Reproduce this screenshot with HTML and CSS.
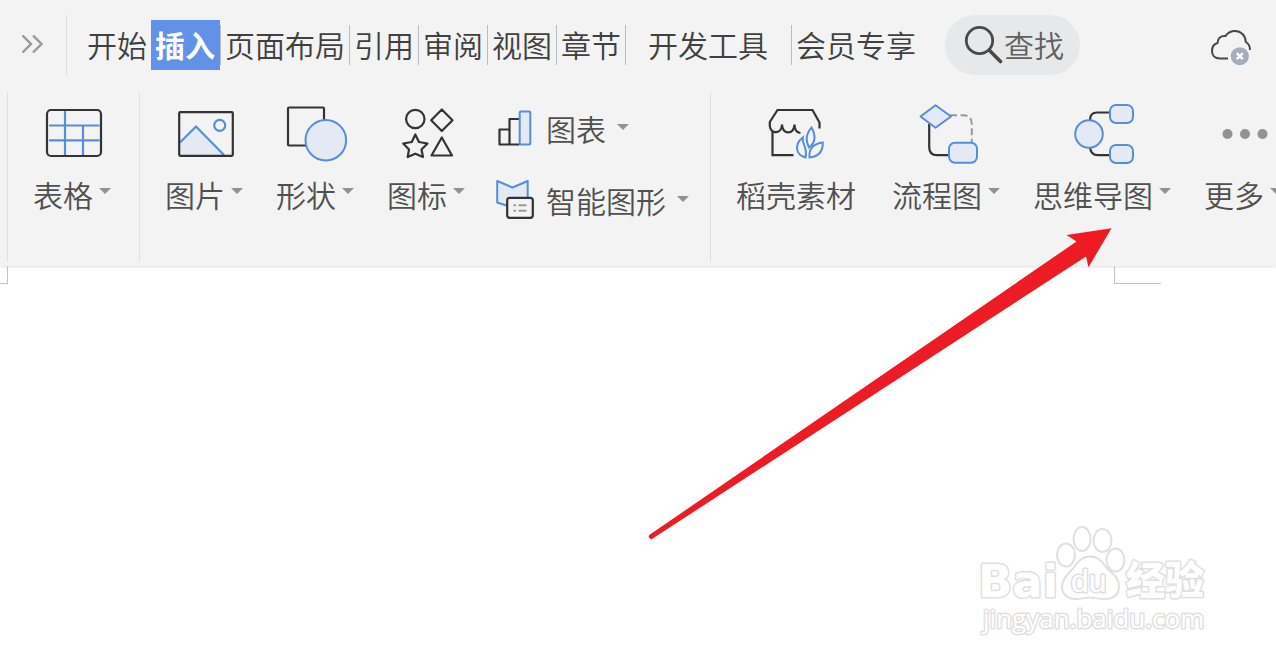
FILE: index.html
```html
<!DOCTYPE html>
<html lang="zh-CN">
<head>
<meta charset="utf-8">
<meta name="viewport" content="width=device-width, initial-scale=1">
<title>插入</title>
<link rel="stylesheet" href="styles.css">
</head>
<body>
<div class="app">
  <header class="toolbar">
    <nav class="tabs">
      <button class="expand" type="button" aria-label="展开">
        <svg width="24" height="20" viewBox="20 34 24 20"><path d="M22.500 34.500l8.500 8.500l-8.500 8.500M33 34.500l8.500 8.500l-8.500 8.500" fill="none" stroke="#999" stroke-width="2.400"/></svg>
      </button>
      <button class="tab tab-first" type="button">开始</button>
      <button class="tab tab-active" type="button">插入</button>
      <button class="tab" type="button">页面布局</button>
      <button class="tab" type="button">引用</button>
      <button class="tab" type="button">审阅</button>
      <button class="tab" type="button">视图</button>
      <button class="tab" type="button">章节</button>
      <button class="tab tab-wide" type="button">开发工具</button>
      <button class="tab" type="button">会员专享</button>
      <button class="search" type="button">
        <svg width="40" height="40" viewBox="964 25 40 40"><g fill="none" stroke="#484848" stroke-linecap="round"><circle cx="979.500" cy="41.500" r="13.200" stroke-width="2.800"/><path d="M989.500 51.500L1000.500 62.500" stroke-width="3.600"/></g></svg>
        <span>查找</span>
      </button>
      <button class="cloud" type="button" aria-label="云状态">
        <svg width="44" height="40" viewBox="1209 27 44 40"><path d="M1228 58.500H1220C1214.500 58.500 1212 55 1212 51C1212 46.500 1214.500 43.800 1217.500 43C1217.500 38 1221 35.500 1225.500 36C1228 32.500 1231.500 31 1235 31C1241 31 1245.500 35.500 1245.800 42C1248.500 43.500 1250 46.500 1250 50" fill="none" stroke="#484848" stroke-width="2"/><circle cx="1239.800" cy="56.200" r="9" fill="#a3adbd"/><path d="M1236.800 53.200l6 6m0-6l-6 6" stroke="#fff" stroke-width="2.400"/></svg>
      </button>
    </nav>
    <div class="ribbon">
      <div class="edge"></div>
      <div class="group">
        <button class="item" type="button">
          <svg class="icon" viewBox="40 100 64 64"><path d="M65 111V155M83 125V155M49 125.500H99.500M49 140.300H99.500" fill="none" stroke="#568ddd" stroke-width="2.200"/><rect x="47" y="110" width="54" height="46" rx="4" fill="none" stroke="#333" stroke-width="2.200"/></svg>
          <span class="label">表格<i class="caret"></i></span>
        </button>
      </div>
      <div class="group">
        <button class="item" type="button">
          <svg class="icon" viewBox="172 100 64 64"><path d="M180 142.500L196 126.500L224 155H180Z" fill="#e4e9f3"/><path d="M180 142.500L196 126.500L224 155" fill="none" stroke="#568ddd" stroke-width="2.200"/><circle cx="219.700" cy="125.300" r="5.500" fill="none" stroke="#568ddd" stroke-width="2.200"/><rect x="179.200" y="112.200" width="53.600" height="43.600" rx="1" fill="none" stroke="#333" stroke-width="2.200"/></svg>
          <span class="label">图片<i class="caret"></i></span>
        </button>
        <button class="item" type="button">
          <svg class="icon" viewBox="283 100 64 64"><rect x="288" y="107.500" width="36" height="38" rx="1" fill="none" stroke="#333" stroke-width="2.200"/><circle cx="325.800" cy="140.200" r="20.300" fill="#e4e9f3" stroke="#568ddd" stroke-width="2"/></svg>
          <span class="label">形状<i class="caret"></i></span>
        </button>
        <button class="item" type="button">
          <svg class="icon" viewBox="394 100 64 64"><g fill="none" stroke="#333" stroke-width="2.200" stroke-linejoin="round"><circle cx="415.300" cy="119" r="9.200"/><path d="M441.800 109.500L452.500 120.200L441.800 131L431.200 120.200ZM441.800 137.500L452 155.500H431.500ZM415.300 134.500L419 142L427.500 143.500L421.500 149.500L423 157L415.300 153.700L407.700 157L409 149.500L403.200 143.500L411.800 142Z"/></g></svg>
          <span class="label">图标<i class="caret"></i></span>
        </button>
        <div class="stack">
          <button class="row" type="button">
            <svg class="small" viewBox="498 107 38 40"><path d="M509.500 143.500H499.500V128.500H509.500M509.500 143.500V118H519.500M509.500 143.500H519.500" fill="none" stroke="#333" stroke-width="2.200" stroke-linejoin="round"/><rect x="519.700" y="110.500" width="10.600" height="33" rx="1" fill="#e4e9f3" stroke="#568ddd" stroke-width="2"/></svg>
            <span>图表</span><i class="caret"></i>
          </button>
          <button class="row" type="button">
            <svg class="small" viewBox="498 180 38 40"><path d="M508 206L497.200 202.500V181L512.500 187.500L527.700 181V199" fill="#e4e9f3" stroke="#568ddd" stroke-width="2" stroke-linejoin="round"/><rect x="507.200" y="197.800" width="25.600" height="20" rx="2.500" fill="#f3f3f3" stroke="#333" stroke-width="2.200"/><path d="M513.500 205.300h2.500m2.500 0h8M513.500 210.700h2.500m2.500 0h8" stroke="#999" stroke-width="2"/></svg>
            <span>智能图形</span><i class="caret"></i>
          </button>
        </div>
      </div>
      <div class="group group-last">
        <button class="item item-plain" type="button">
          <svg class="icon" viewBox="764 100 64 64"><path d="M819.500 128.500V122.500L812.500 110H777.500L769.800 122V126C770.500 135 782 134 782 124.500C782 135 794.500 135 794.500 124.500C794.500 129.500 796.500 132.500 800.500 133M772.500 132V155.200H793.500" fill="none" stroke="#333" stroke-width="2.200"/><g fill="none" stroke="#568ddd" stroke-width="2"><path d="M811.500 127.500C805.500 135 805.500 140.500 809 147.500C816 142 815.500 134.500 811.500 127.500ZM802.800 137.500C801.500 144 808 147 805.500 157.500C795.500 155 794 144.500 802.800 137.500ZM822.800 142.500C813.500 143.500 808.500 149 809.500 157.500C819 156.500 823 151 822.800 142.500Z"/></g></svg>
          <span class="label">稻壳素材</span>
        </button>
        <button class="item" type="button">
          <svg class="icon" viewBox="914 100 64 64"><path d="M929.200 124V147Q929.200 155.200 937 155.200H950" fill="none" stroke="#333" stroke-width="2.200"/><path d="M950 115.200H963Q971.800 115.200 971.800 124V142" fill="none" stroke="#999" stroke-width="2" stroke-dasharray="7 3.500"/><path d="M935.500 105.200L951 116.500L935.500 127.700L920.500 116.500Z" fill="#e4e9f3" stroke="#568ddd" stroke-width="2" stroke-linejoin="round"/><rect x="949" y="142.800" width="28" height="20" rx="6" fill="#e4e9f3" stroke="#568ddd" stroke-width="2"/></svg>
          <span class="label">流程图<i class="caret"></i></span>
        </button>
        <button class="item" type="button">
          <svg class="icon" viewBox="1070 100 64 64"><path d="M1110 112.500H1097Q1090 112.500 1090 120M1110 155.200H1098Q1090.500 155.200 1090 147" fill="none" stroke="#333" stroke-width="2.200"/><g fill="#e4e9f3" stroke="#568ddd" stroke-width="2"><circle cx="1089" cy="134" r="13.800"/><rect x="1110" y="105" width="23" height="18" rx="6"/><rect x="1110" y="145" width="23" height="18" rx="6"/></g></svg>
          <span class="label">思维导图<i class="caret"></i></span>
        </button>
        <button class="item" type="button">
          <svg class="icon" viewBox="1211 100 64 64"><g fill="#929292"><circle cx="1227.500" cy="134" r="5"/><circle cx="1245" cy="134" r="5"/><circle cx="1262.500" cy="134" r="5"/></g></svg>
          <span class="label">更多<i class="caret"></i></span>
        </button>
      </div>
    </div>
  </header>
  <main class="page">
    <span class="corner corner-left"></span>
    <span class="corner corner-right"></span>
  </main>
  <svg class="arrow" width="468" height="316" viewBox="646 226 468 316" aria-hidden="true"><path d="M649.300 535L1076.500 241.500L1066.500 235L1111.500 228.300L1088.500 267.300L1086 256.500L652.300 538.800A2.500 2.500 0 0 1 649.300 535Z" fill="#ed1c24"/></svg>
  <svg class="watermark" width="240" height="118" viewBox="974 522 240 118" role="img" aria-label="Baidu 经验">
    <g class="mark">
      <ellipse cx="1066" cy="555" rx="9" ry="11.500"/>
      <ellipse cx="1082" cy="539" rx="8.500" ry="12"/>
      <ellipse cx="1102.500" cy="540.500" rx="9" ry="11.500"/>
      <ellipse cx="1115.500" cy="560" rx="9" ry="11.500"/>
      <path d="M1090 556.500C1097 556.500 1102 561 1105 566C1110 573 1119 576 1119 586C1119 595 1113 599 1104 599C1098 599 1094 597.500 1090 597.500C1086 597.500 1082 599 1076 599C1067 599 1062 594 1062 587C1062 577 1071 572 1075 566C1079 560 1083 556.500 1090 556.500Z"/>
      <text class="brand" x="978" y="597">Bai</text>
      <text class="du" x="1071" y="592">du</text>
      <text class="cn" x="1126" y="594">经验</text>
      <text class="url" x="983" y="628">jingyan.baidu.com</text>
    </g>
  </svg>
</div>
</body>
</html>
```
FILE: styles.css
```css
* {
  box-sizing: border-box;
}

body {
  margin: 0;
  background: #fff;
  color: #404040;
  font-family: "Noto Sans CJK SC", "Noto Sans", sans-serif;
  font-size: 30px;
  font-weight: 350;
}

button {
  margin: 0;
  padding: 0;
  border: 0;
  background: none;
  color: inherit;
  font: inherit;
  white-space: nowrap;
  flex: none;
}

svg {
  display: block;
  flex: none;
}

.app {
  position: relative;
  min-height: 100vh;
  overflow: hidden;
  display: flex;
  flex-direction: column;
}

.toolbar {
  background: #f3f3f3;
  padding-bottom: 4px;
  box-shadow: 0 1px 3px rgba(0, 0, 0, 0.12);
}

.tabs {
  display: flex;
  align-items: center;
  height: 92px;
  padding-bottom: 2px;
}

.expand {
  display: flex;
  align-items: center;
  width: 67px;
  height: 60px;
  padding-left: 20px;
  border-right: 1px solid #dcdcdc;
}

.tab {
  height: 40px;
  padding: 0 4px 2px;
  border-left: 1px solid #b4bdca;
  line-height: 38px;
}

.tab-first {
  margin-left: 15px;
  border-left-color: transparent;
}

.tab-active {
  height: 50px;
  padding-right: 5px;
  border-left: 0;
  background: #6192e8;
  color: #fff;
  font-weight: 700;
  line-height: 48px;
}

.tab-wide {
  padding: 0 23px 2px 22px;
}

.tab-wide + .tab {
  padding-right: 0;
}

.search {
  display: flex;
  align-items: center;
  height: 60px;
  margin-left: 29px;
  padding: 0 16px 2px 19px;
  border-radius: 30px;
  background: #e7e8e9;
  color: #606060;
}

.cloud {
  margin: 4px 23px 0 auto;
}

.ribbon {
  display: flex;
  height: 170px;
  overflow: hidden;
  color: #505050;
}

.edge {
  flex: none;
  width: 8px;
  border-right: 1px solid #e0e0e0;
}

.group {
  display: flex;
  flex: none;
  align-items: flex-start;
  gap: 33px;
  padding: 8px 21px 0 25px;
  border-right: 1px solid #e0e0e0;
}

.edge + .group {
  padding-right: 28px;
}

.group-last {
  border-right: 0;
}

.item {
  display: flex;
  flex-direction: column;
  align-items: center;
  gap: 10px;
}

.item-plain {
  margin-right: 3px;
}

.icon {
  width: 64px;
  height: 64px;
}

.label {
  display: flex;
  align-items: center;
  gap: 6px;
  line-height: 40px;
}

.caret {
  width: 12px;
  height: 6px;
  background: #929292;
  clip-path: polygon(0 0, 100% 0, 50% 100%);
}

.label .caret {
  margin-bottom: 6px;
}

.stack {
  display: flex;
  flex-direction: column;
  gap: 32px;
  padding-top: 8px;
}

.row {
  display: flex;
  align-items: center;
  line-height: 40px;
}

.small {
  width: 38px;
  height: 40px;
  margin-right: 10px;
  overflow: visible;
}

.row .caret {
  margin: 0 0 2px 11px;
}

.page {
  flex: 1;
  display: flex;
  align-items: flex-start;
  justify-content: space-between;
}

.corner {
  height: 18px;
  border-bottom: 1px solid #c4c4c4;
}

.corner-left {
  width: 8px;
  border-right: 1px solid #c4c4c4;
}

.corner-right {
  width: 47px;
  margin-right: 115px;
  border-left: 1px solid #c4c4c4;
}

.arrow {
  position: absolute;
  top: 226px;
  left: 646px;
}

.watermark {
  position: absolute;
  right: 62px;
  bottom: 23px;
}

.mark {
  fill: #fff;
  stroke: #e0e0e0;
  stroke-width: 2;
  stroke-linejoin: round;
}

.mark text {
  paint-order: stroke;
  stroke-width: 3;
}

.brand {
  font: 700 45px "DejaVu Sans", sans-serif;
}

.du {
  font: 400 32px "Liberation Sans", sans-serif;
}

.cn {
  font: 900 39px "Noto Sans CJK SC", sans-serif;
}

.url {
  font: 500 26px "Open Sans", sans-serif;
}
```
